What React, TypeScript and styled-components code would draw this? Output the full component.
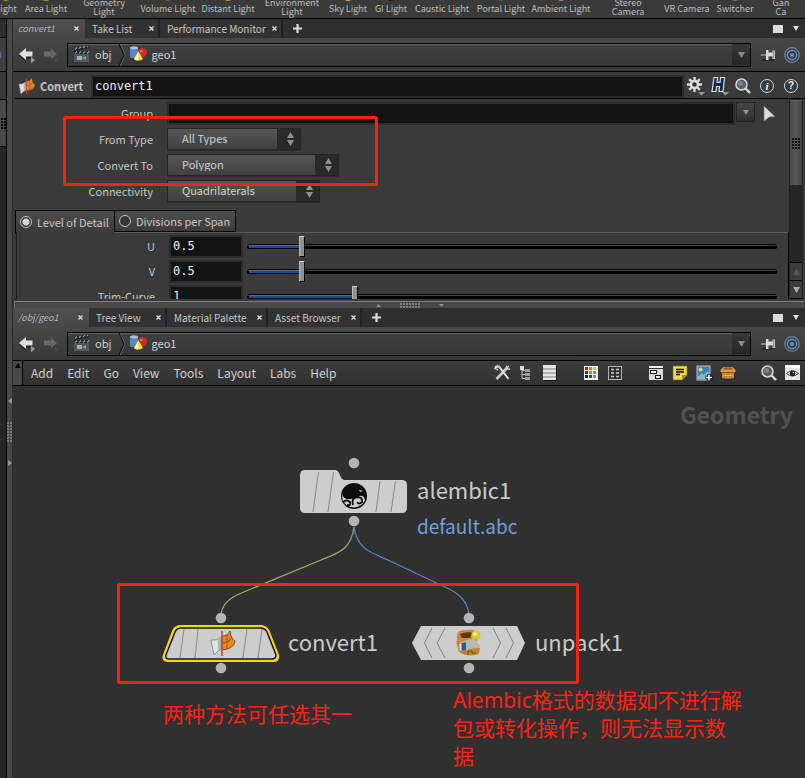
import React, { useState } from 'react';
import styled, { createGlobalStyle, css } from 'styled-components';

const ui = `'Noto Sans CJK SC', 'Noto Sans', sans-serif`;
const mono = `'DejaVu Sans Mono', 'Liberation Mono', monospace`;

const Global = createGlobalStyle`
  *, *::before, *::after { box-sizing: border-box; }
  html, body { margin: 0; background: #303030; }
  body { font-family: ${ui}; font-size: 11px; line-height: 14px; color: #c6c6c6; }
  button, input, select { font: inherit; color: inherit; margin: 0; border-radius: 0; }
  svg { display: block; flex: none; overflow: visible; }
`;

const Window = styled.div`
  position: relative;
  display: flex;
  flex-direction: column;
  min-height: 100vh;
  overflow: hidden;
  background: #3a3a3a;
`;

/* ---------- shelf ---------- */

const Shelf = styled.div`
  display: flex;
  align-items: flex-end;
  height: 19px;
  flex: none;
  overflow: hidden;
  padding-bottom: 2px;
  border-bottom: 1px solid #000;
  background: #3a3a3a;
`;

const ShelfTool = styled.button<{ $w: number; $single: boolean }>`
  display: flex;
  flex-direction: column;
  align-items: center;
  flex: none;
  width: ${p => p.$w}px;
  padding: 0 0 ${p => (p.$single ? 3 : 0)}px;
  border: 0;
  background: none;
  font-size: 9px;
  line-height: 9px;
  white-space: nowrap;
  color: #bdbdbd;
`;

const ShelfGlint = styled.i<{ $c: string }>`
  width: 8px;
  height: 4px;
  margin-bottom: 3px;
  border-radius: 0 0 4px 4px;
  background: ${p => p.$c};
`;

const shelfTools: [string[], number, string][] = [
  [['Light'], 12, '#a89420'],
  [['Area Light'], 68, '#b5a11c'],
  [['Geometry', 'Light'], 48, ''],
  [['Volume Light'], 80, '#8a5a2a'],
  [['Distant Light'], 40, '#b5a11c'],
  [['Environment', 'Light'], 88, ''],
  [['Sky Light'], 24, '#c9b36a'],
  [['GI Light'], 62, '#202020'],
  [['Caustic Light'], 40, '#3d4a78'],
  [['Portal Light'], 78, '#3f7a35'],
  [['Ambient Light'], 42, '#8c8c8c'],
  [['Stereo', 'Camera'], 92, ''],
  [['VR Camera'], 26, '#484848'],
  [['Switcher'], 70, '#777777'],
  [['Gan', 'Ca'], 22, ''],
];

/* ---------- frame ---------- */

const Workspace = styled.div`
  display: flex;
  flex: 1;
`;

const Neighbour = styled.div`
  display: flex;
  flex-direction: column;
  flex: none;
  width: 7px;
  overflow: hidden;
  border-right: 1px solid #000;
  background: #262626;
`;

const NeighbourBar = styled.div<{ $h: number; $bg: string }>`
  height: ${p => p.$h}px;
  flex: none;
  display: flex;
  align-items: center;
  justify-content: flex-end;
  border-bottom: 1px solid #000;
  background: ${p => p.$bg};
`;

const NeighbourTarget = styled.div`
  margin-right: 5px;
`;

const VSplitter = styled.div`
  display: flex;
  flex-direction: column;
  align-items: center;
  flex: none;
  width: 5px;
  padding-top: 379px;
  gap: 18px;
  background: #484848;
`;

const Main = styled.main`
  display: flex;
  flex-direction: column;
  flex: 1;
  min-width: 0;
  border-left: 1px solid #2b2b2b;
`;

const HSplitter = styled.div`
  display: flex;
  align-items: center;
  justify-content: center;
  gap: 19px;
  height: 7px;
  flex: none;
  margin: 0 1px;
  border-top: 1px solid #808080;
  border-left: 1px solid #707070;
  background: #484848;
`;

/* ---------- pane tabs ---------- */

const TabBar = styled.div`
  display: flex;
  align-items: stretch;
  height: 19px;
  flex: none;
  background: #2e2e2e;
`;

const Tab = styled.div<{ $w: number; $active?: boolean }>`
  display: flex;
  align-items: center;
  justify-content: space-between;
  flex: none;
  width: ${p => p.$w}px;
  padding: 0 4px 0 7px;
  border-right: 2px solid #222;
  background: #323232;
  font-size: 10px;
  ${p => p.$active && css`
    padding-left: 5px;
    padding-right: 6px;
    border-right: 0;
    background: linear-gradient(#505050, #464646);
    font-size: 9px;
    font-style: italic;
    color: #b4b4b4;
  `}
`;

const TabName = styled.button`
  padding: 0;
  border: 0;
  background: none;
  white-space: nowrap;
`;

const IconButton = styled.button`
  display: flex;
  align-items: center;
  justify-content: center;
  flex: none;
  padding: 0;
  border: 0;
  background: none;
`;

const AddTab = styled(IconButton)`
  width: 28px;
`;

const TabTools = styled.div`
  display: flex;
  align-items: center;
  gap: 10px;
  margin-left: auto;
  padding-right: 6px;
`;

/* ---------- path bar ---------- */

const PathBar = styled.div`
  display: flex;
  align-items: center;
  height: 34px;
  flex: none;
  padding: 0 5px 0 6px;
  border-bottom: 1px solid #000;
  background: linear-gradient(#484848, #383838);
`;

const HistoryButtons = styled.div`
  display: flex;
  gap: 8px;
  width: 48px;
  flex: none;
`;

const PathField = styled.div`
  display: flex;
  align-items: center;
  flex: 1;
  height: 24px;
  padding-left: 5px;
  border: 1px solid #000;
  box-shadow: inset 0 1px #666;
  background: linear-gradient(#404040, #373737);
`;

const Crumb = styled.button`
  display: flex;
  align-items: center;
  gap: 5px;
  padding: 0 0 2px;
  border: 0;
  background: none;
  color: #d2d2d2;
`;

const PathDrop = styled(IconButton)`
  width: 18px;
  height: 21px;
  margin-left: auto;
  background: linear-gradient(#383838, #262626);
`;

const PathTools = styled.div`
  display: flex;
  align-items: center;
  gap: 7px;
  margin-left: 10px;
`;

/* ---------- parameter pane ---------- */

const NodeHeader = styled.div`
  display: flex;
  align-items: center;
  height: 27px;
  flex: none;
  margin-left: 2px;
  padding: 2px 7px 0 4px;
  border-bottom: 1px solid #000;
`;

const NodeType = styled.label`
  width: 51px;
  margin-left: 5px;
  font-size: 11px;
  font-weight: 700;
`;

const DarkInput = styled.input`
  min-width: 0;
  height: 23px;
  padding: 0 2px;
  border: 2px solid #2b2b2b;
  outline: 0;
  background: #131313;
  font-family: ${mono};
  font-size: 12px;
  color: #f0f0f0;
`;

const NameInput = styled(DarkInput)`
  flex: 1;
`;

const HeaderTools = styled.div`
  display: flex;
  align-items: center;
  gap: 6px;
  margin-left: 3px;
`;

const ParamPane = styled.div`
  display: flex;
  height: 200px;
  flex: none;
  overflow: hidden;
  padding-right: 2px;
`;

const ParamBody = styled.div`
  display: flex;
  flex-direction: column;
  flex: 1;
  min-width: 0;
  padding-top: 3px;
`;

const ParamList = styled.div`
  display: flex;
  flex-direction: column;
  gap: 4px;
`;

const ParamRow = styled.div`
  display: flex;
  align-items: center;
  height: 22px;
`;

const ParamLabel = styled.label<{ $w: number; $gap: number }>`
  flex: none;
  width: ${p => p.$w}px;
  margin-right: ${p => p.$gap}px;
  text-align: right;
  white-space: nowrap;
`;

const GroupInput = styled(DarkInput)`
  flex: 1;
`;

const SmallDrop = styled(IconButton)`
  width: 19px;
  height: 20px;
  margin: 0 9px 2px 1px;
  border: 1px solid #242424;
  background: linear-gradient(#444, #303030);
`;

const PickButton = styled(IconButton)`
  margin-right: 13px;
`;

const SelectShell = styled.div<{ $w: number }>`
  position: relative;
  width: ${p => p.$w}px;
  height: 22px;
`;

const Select = styled.select`
  appearance: none;
  width: 100%;
  height: 22px;
  padding: 0 24px 2px 14px;
  border: 1px solid #252525;
  outline: 0;
  background: linear-gradient(90deg, transparent calc(100% - 23px), #2a2a2a calc(100% - 23px)), linear-gradient(#555, #404040);
  box-shadow: 0 1px #2c2c2c;
  color: #d0d0d0;
`;

const Stepper = styled.span`
  position: absolute;
  top: 4px;
  right: 7px;
  pointer-events: none;
`;

const FolderTabs = styled.div`
  display: flex;
  height: 24px;
  flex: none;
  margin: 8px 0 0 2px;
`;

const FolderTab = styled.label<{ $w: number; $active: boolean }>`
  display: flex;
  align-items: center;
  gap: 5px;
  width: ${p => p.$w}px;
  height: ${p => (p.$active ? 24 : 22)}px;
  padding-left: 4px;
  border: 1px solid #000;
  white-space: nowrap;
  ${p => p.$active
    ? css`border-width: 1px 0 0 1px; background: linear-gradient(#4c4c4c, #3a3a3a); padding-bottom: 2px;`
    : css`background: linear-gradient(#4c4c4c, #3c3c3c);`}
`;

const Radio = styled.input`
  appearance: none;
  width: 12px;
  height: 12px;
  border: 1px solid #c4c4c4;
  border-radius: 50%;
  background: #363636;
  &:checked { background: radial-gradient(#d4d4d4 0 3px, #363636 4px); }
`;

const FolderBody = styled.div`
  display: flex;
  flex-direction: column;
  gap: 3px;
  flex: 1;
  min-height: 0;
  overflow: hidden;
  margin: -2px 0 0 3px;
  padding-top: 3px;
  border-left: 1px solid #222;
  border-right: 1px solid #000;
  background: linear-gradient(#5a5a5a, #5a5a5a) 98px 0 / 100% 1px no-repeat;
`;

const ValueInput = styled(DarkInput)`
  width: 74px;
  margin-right: 4px;
`;

const SliderRow = styled(ParamRow)`
  flex: none;
  padding-right: 11px;
`;

const Slider = styled.input`
  appearance: none;
  flex: 1;
  min-width: 0;
  height: 22px;
  background: none;
  --track: linear-gradient(#000 0 1px, #444 1px 2px, #000 2px);
  &::-webkit-slider-runnable-track {
    height: 5px;
    border-radius: 2px;
    background:
      linear-gradient(#000 0 1px, #6a6a6a 1px 2px, #0a4fa3 2px 4px, #000 4px) 2px 0 / var(--fill) 5px no-repeat,
      var(--track);
  }
  &::-webkit-slider-thumb {
    appearance: none;
    width: 6px;
    height: 21px;
    margin-top: -8px;
    border: 1px solid #000;
    border-top-color: #ccc;
    border-left-color: #bbb;
    background: #929292;
  }
`;

const ScrollTrack = styled.div`
  display: flex;
  flex-direction: column;
  flex: none;
  width: 14px;
  border: 1px solid #222;
  border-width: 0 1px;
  background: #252525;
`;

const ScrollThumb = styled.div`
  display: flex;
  align-items: center;
  justify-content: center;
  height: 85px;
  margin-top: 1px;
  border-top: 1px solid #666;
  background: linear-gradient(90deg, #484848, #585858, #424242);
`;

const ScrollStep = styled(IconButton)`
  height: 18px;
  border-top: 1px solid #000;
  background: #3c3c3c;
`;

const ScrollSteps = styled.div`
  display: flex;
  flex-direction: column;
  margin-top: auto;
  border-bottom: 1px solid #000;
`;

const PaneFoot = styled.div`
  height: 2px;
  flex: none;
`;

/* ---------- network pane ---------- */

const MenuBar = styled.div`
  display: flex;
  align-items: center;
  height: 25px;
  flex: none;
  border-bottom: 1px solid #000;
  background: linear-gradient(#3c3c3c, #303030);
`;

const CollapseStrip = styled(IconButton)`
  align-self: stretch;
  align-items: flex-start;
  width: 10px;
  padding-top: 2px;
  border: solid #000;
  border-width: 0 1px 0 0;
  background: #484848;
`;

const Menu = styled.nav`
  display: flex;
  gap: 14px;
  margin-left: 8px;
`;

const MenuItem = styled.button`
  padding: 0;
  border: 0;
  background: none;
  font-size: 12px;
  color: #cfcfcf;
`;

const IconGroups = styled.div`
  display: flex;
  gap: 25px;
  margin-left: auto;
  padding-right: 4px;
`;

const IconGroup = styled.div`
  display: flex;
  gap: 8px;
`;

const Canvas = styled.section`
  position: relative;
  flex: 1;
  min-height: 392px;
  overflow: hidden;
  background: #303030;
`;

const ContextName = styled.div`
  padding: 12px 12px 0 0;
  text-align: right;
  font-size: 23px;
  line-height: 32px;
  font-weight: 700;
  color: #505050;
`;

const Wires = styled.svg`
  position: absolute;
  left: 0;
  top: 0;
`;

const NodeBox = styled.div<{ $x: number; $y: number }>`
  position: absolute;
  left: ${p => p.$x}px;
  top: ${p => p.$y}px;
  display: flex;
  align-items: center;
  gap: 10px;
`;

const NodeText = styled.div`
  font-size: 22px;
  line-height: 36px;
  white-space: nowrap;
  color: #cbcbcb;
`;

const FileText = styled.div`
  position: absolute;
  left: 404px;
  top: 122px;
  font-size: 19px;
  line-height: 36px;
  color: #6f9fdc;
`;

/* ---------- annotations ---------- */

const Frame = styled.div<{ $x: number; $y: number; $w: number; $h: number }>`
  position: absolute;
  left: ${p => p.$x}px;
  top: ${p => p.$y}px;
  width: ${p => p.$w}px;
  height: ${p => p.$h}px;
  border: 3px solid #fb2214;
  border-radius: 3px;
  pointer-events: none;
`;

const Note = styled.p<{ $x: number; $y: number }>`
  position: absolute;
  left: ${p => p.$x}px;
  top: ${p => p.$y}px;
  margin: 0;
  font-family: 'Noto Sans', 'Noto Sans CJK SC', sans-serif;
  font-size: 21px;
  line-height: 28px;
  white-space: nowrap;
  color: #fb2214;
`;

/* ---------- icons ---------- */

const Tri = ({ w = 7, h = 6, up = false, c = '#8f8f8f' }) => (
  <svg width={w} height={h} viewBox="0 0 10 10" preserveAspectRatio="none">
    <path d={up ? 'M0 10L5 0L10 10Z' : 'M0 0H10L5 10Z'} fill={c} />
  </svg>
);

const SideTri = ({ left = false }) => (
  <svg width="4" height="6" viewBox="0 0 4 6"><path d={left ? 'M4 0V6L0 3Z' : 'M0 0V6L4 3Z'} fill="#999" /></svg>
);

const Dots = ({ cols, rows, c, p = 3 }: { cols: number; rows: number; c: string; p?: number }) => (
  <svg width={cols * p - 1} height={rows * p - 1}>
    {Array.from({ length: cols * rows }, (_, i) => (
      <rect key={i} x={(i % cols) * p} y={Math.floor(i / cols) * p} width={p - 1} height={p - 1} fill={c} />
    ))}
  </svg>
);

const CloseX = () => (
  <svg width="5" height="5" viewBox="0 0 5 5"><path d="M.5 .5L4.5 4.5M4.5 .5L.5 4.5" stroke="#d8d8d8" strokeWidth="1.4" /></svg>
);

const Plus = () => (
  <svg width="9" height="9" viewBox="0 0 9 9"><path d="M4.5 0V9M0 4.5H9" stroke="#dcdcdc" strokeWidth="2.2" /></svg>
);

const BackArrow = () => (
  <svg width="16" height="16" viewBox="0 0 16 16">
    <path d="M0 8.500L7 2.500V6H13.500V11.500H7V15Z" fill="#202020" />
    <path d="M0 7L7 1V4.500H13.500V9.500H7V13Z" fill="#dededb" />
    <path d="M12 9.500L16 13L12 16.500Z" fill="#9a9a9a" />
  </svg>
);

const ForwardArrow = () => (
  <svg width="16" height="16" viewBox="0 0 16 16">
    <path d="M14 7L8 1.500V4.500H1V9.500H8V12.500Z" fill="#666" />
    <path d="M12 11L15 13.500L12 16Z" fill="#4a4a4a" />
  </svg>
);

const Clapper = () => (
  <svg width="17" height="17" viewBox="0 0 17 17">
    <path d="M1 3L15 0L16 3L2 6Z" fill="#1f2324" />
    <path d="M2 4.500L4 2.500M6 3.700L8 1.700M10 3L12 1M14 2.200L15 1" stroke="#999" strokeWidth="1.300" />
    <rect x="1" y="6" width="15" height="11" fill="#4f595d" />
    <path d="M1 7.500H16" stroke="#202527" strokeWidth="3" />
    <path d="M2 8.500L4 6.500M6 8.500L8 6.500M10 8.500L12 6.500M14 8.500L16 6.500" stroke="#999" strokeWidth="1.300" />
    <rect x="4" y="11" width="5" height="4" fill="#a7acad" /><path d="M9 13L13 11V15Z" fill="#8f9799" />
  </svg>
);

const Chevron = () => (
  <svg width="6" height="22" viewBox="0 0 6 22">
    <path d="M1 0L6 11L1 22" fill="none" stroke="#777" /><path d="M0 0L5 11L0 22" fill="none" stroke="#151515" strokeWidth="1.300" />
  </svg>
);

const GeoIcon = () => (
  <svg width="17" height="15" viewBox="0 0 17 15">
    <rect x="0" y="1" width="8" height="11" rx="1.500" fill="#5b86bd" /><ellipse cx="4" cy="1.800" rx="4" ry="1.600" fill="#a4c2e5" />
    <circle cx="12.500" cy="6.500" r="4.500" fill="#cc2b20" /><circle cx="11.300" cy="5" r="1.300" fill="#ed7a6d" />
    <path d="M8.500 5.500L13 13Q8.500 16 4 13Z" fill="#f1df43" /><path d="M8.500 5.500L8 14.500Q5.500 14.500 4 13Z" fill="#fff39a" />
  </svg>
);

const Pin = () => (
  <svg width="16" height="14" viewBox="0 0 16 14">
    <path d="M1 12H13" stroke="#2a2a2a" strokeWidth="2" />
    <path d="M0 7H6" stroke="#aaa" strokeWidth="1.300" />
    <path d="M5 2H7.500V4.500H11.500V2.500H14V11H11.500V9H7.500V12H5Z" fill="#dadada" />
    <path d="M7.500 8.500H11.500M12.700 3V10.500" stroke="#777" />
  </svg>
);

const Target = ({ s = 16 }) => (
  <svg width={s} height={s} viewBox="0 0 16 16" fill="none" stroke="#6183b4">
    <circle cx="8" cy="8" r="7.300" strokeWidth="1.200" /><circle cx="8" cy="8" r="4.600" stroke="#7390b8" strokeWidth="1.200" />
    <circle cx="8" cy="8" r="2" fill="#5da1e8" stroke="#36639b" />
  </svg>
);

const ConvertIcon = ({ s = 16 }) => (
  <svg width={s} height={s} viewBox="0 0 24 24">
    <path d="M0 9Q5 10 11 6V18Q7 19 3 24Z" fill="#dfe4df" stroke="#8d9a93" />
    <path d="M7 8L11 6V18L7 19.500Z" fill="#a9b8b0" />
    <path d="M11 5Q17 5 19 0Q20 8 24 10Q23 18 11 19Z" fill="#e6862a" stroke="#8d4e16" />
    <path d="M11 12Q18 12 21 6M16 4V18" fill="none" stroke="#9c5518" />
    <path d="M11 0V25" stroke="#c8403a" strokeWidth="1.500" />
  </svg>
);

const Gear = () => (
  <svg width="18" height="18" viewBox="0 0 18 18">
    <g stroke="#dcdcdc" strokeWidth="2.400">
      <path d="M7.500 0V4M7.500 11V15M0 7.500H4M11 7.500H15M2.200 2.200L5 5M10 10L12.800 12.800M12.800 2.200L10 5M5 10L2.200 12.800" />
      <circle cx="7.500" cy="7.500" r="3.500" fill="#333" />
    </g>
    <path d="M11 15H18L14.500 18.500Z" fill="#999" />
  </svg>
);

const HIcon = () => (
  <svg width="18" height="18" viewBox="0 0 18 18">
    <path d="M3 .5H6.500L6 5.500H9L9.500 .5H13.500L12 14.500H8L8.500 9.500H5.500L5 14.500H1Z" fill="#10294b" stroke="#dcdfe4" strokeWidth="1.200" />
    <path d="M11 15H18L14.500 18.500Z" fill="#999" />
  </svg>
);

const Lens = () => (
  <svg width="16" height="16" viewBox="0 0 16 16">
    <path d="M10 10L15 15" stroke="#dcdcdc" strokeWidth="2.400" />
    <circle cx="6.500" cy="6.500" r="5.500" fill="#566167" stroke="#d8d8d8" strokeWidth="1.500" />
    <circle cx="5.500" cy="5.500" r="2.500" fill="#77858c" />
  </svg>
);

const Badge = styled.span<{ $i?: boolean }>`
  display: flex;
  align-items: center;
  justify-content: center;
  width: 14px;
  height: 14px;
  border: 1px solid #d6d6d6;
  border-radius: 50%;
  background: #343b3f;
  font: ${p => (p.$i ? "italic 700 11px/12px 'Liberation Serif', serif" : "700 10px/12px 'Liberation Sans', sans-serif")};
  color: #f0f0f0;
`;

const BadgeTools = styled.div`
  display: flex;
  gap: 10px;
  margin-left: 3px;
`;

const Cursor = () => (
  <svg width="12" height="15" viewBox="0 0 12 15"><path d="M0 0L11 10.500L5.500 11L0 15Z" fill="#dcdcd8" stroke="#777" strokeWidth=".6" /></svg>
);

const UpDown = () => (
  <svg width="7" height="14" viewBox="0 0 7 14"><path d="M0 6L3.500 0L7 6ZM0 8H7L3.500 14Z" fill="#8f8f8f" /></svg>
);

const ToolsIcon = () => (
  <svg width="16" height="16" viewBox="0 0 16 16" fill="none">
    <path d="M2.500 14L13 3" stroke="#cfcfcf" strokeWidth="2.600" /><path d="M12 4L15 1M12.500 .5V4H16" stroke="#cfcfcf" strokeWidth="1.300" />
    <path d="M1 2L5 1.500L14.500 14" stroke="#e6e6e6" strokeWidth="2" /><path d="M0 3L4 5M3 0L6 3" stroke="#bdbdbd" strokeWidth="1.500" />
  </svg>
);

const TreeIcon = () => (
  <svg width="16" height="16" viewBox="0 0 16 16">
    <path d="M4 3V13.500H8M4 5.500H8M4 9.500H8" fill="none" stroke="#c4c4c4" />
    <rect x="2" y="1" width="4" height="4" fill="#ddd" /><path d="M7 4H12V7H7ZM7 8H12V11H7ZM7 12H12V15H7Z" fill="#9d9d9d" />
  </svg>
);

const ListIcon = () => (
  <svg width="16" height="16" viewBox="0 0 16 16">
    <rect x="2" y="1" width="13" height="15" fill="#151515" /><rect x="1" y="0" width="13" height="15" fill="#e4e4e2" />
    <path d="M1 4H14M1 8H14M1 12H14" stroke="#b0b0ae" strokeWidth="2" />
  </svg>
);

const PaletteIcon = () => (
  <svg width="16" height="16" viewBox="0 0 16 16">
    <rect x="1" y="1" width="14" height="14" fill="#f2f2f2" />
    {['#c81414', '#e8780c', '#e0c40a', '#243a60', '#6cb820', '#5a96d0', '#151515', '#444', '#8a8a8a'].map((c, i) => (
      <rect key={c} x={2 + (i % 3) * 4} y={2 + Math.floor(i / 3) * 4} width="3" height="3" fill={c} />
    ))}
  </svg>
);

const GridIcon = () => (
  <svg width="16" height="16" viewBox="0 0 16 16">
    <rect x="1.500" y="1.500" width="13" height="13" fill="#2f2f2f" stroke="#b6b6b6" />
    <path d="M4 4.500H7M9 4.500H12M4 8H7M9 8H12M4 11.500H7M9 11.500H12" stroke="#cfcfcf" strokeWidth="1.600" />
  </svg>
);

const NetBoxIcon = () => (
  <svg width="16" height="16" viewBox="0 0 16 16">
    <rect x="1" y="1" width="14" height="14" fill="#d9d9d7" /><path d="M1 2H15" stroke="#f8f8f8" strokeWidth="2" />
    <path d="M1 3.500H15" stroke="#333" />
    <rect x="2.500" y="5.500" width="6" height="3" fill="#fff" stroke="#111" /><rect x="7.500" y="10.500" width="5" height="3" fill="#fff" stroke="#111" />
  </svg>
);

const StickyIcon = () => (
  <svg width="16" height="16" viewBox="0 0 16 16">
    <path d="M1 1H15V10L10 15H1Z" fill="#ead94a" stroke="#7c6e12" strokeWidth=".6" /><path d="M15 10L10 15V10Z" fill="#a89520" />
    <path d="M4 4.500H12M4 7H12M4 9.500H8" stroke="#141100" strokeWidth="1.300" />
  </svg>
);

const ImageIcon = () => (
  <svg width="16" height="16" viewBox="0 0 16 16">
    <rect x="1" y="1" width="13" height="14" fill="#3a7fc6" stroke="#c0c0c0" />
    <circle cx="4.500" cy="4.500" r="2" fill="#ecd54a" /><path d="M1.500 14V12L6 8L8 10L11 6L13.500 9V14Z" fill="#7dc0ba" />
    <path d="M13 9V16M9.500 12.500H16.500" stroke="#111" strokeWidth="3.400" /><path d="M13 9.500V15.500M10 12.500H16" stroke="#fff" strokeWidth="1.500" />
  </svg>
);

const CrateIcon = () => (
  <svg width="16" height="16" viewBox="0 0 16 16">
    <path d="M2 6H14V13Q8 14.500 2 13Z" fill="#c98635" />
    <path d="M3.500 2H12.500L15.500 5V7H.5V5Z" fill="#dc9b4b" />
    <path d="M4.500 2.500H11.500L13 4.500H3Z" fill="#94581b" />
    <path d="M1 7.500H15" stroke="#8c5216" /><path d="M3 10.500H13" stroke="#e5ad61" />
  </svg>
);

const EyeIcon = () => (
  <svg width="16" height="16" viewBox="0 0 16 16">
    <rect x="0" y="0" width="15" height="15" fill="#e5e5e3" /><path d="M0 1.500H15" stroke="#fff" strokeWidth="3" />
    <path d="M1.500 8.500Q7.500 3 13.500 8.500Q7.500 13.500 1.500 8.500Z" fill="#fff" stroke="#333" />
    <circle cx="7.500" cy="8.300" r="2.800" fill="#222" /><circle cx="8.300" cy="7.500" r=".8" fill="#ccc" />
  </svg>
);

/* ---------- composed parts ---------- */

const PaneTabs = ({ tabs }: { tabs: [string, number][] }) => (
  <TabBar>
    {tabs.map(([name, w], i) => (
      <Tab key={name} $w={w} $active={i === 0}>
        <TabName>{name}</TabName>
        <IconButton aria-label={`Close ${name}`}><CloseX /></IconButton>
      </Tab>
    ))}
    <AddTab aria-label="New tab"><Plus /></AddTab>
    <TabTools>
      <IconButton aria-label="Maximize pane"><svg width="10" height="8"><rect width="10" height="8" fill="#dcdcda" /></svg></IconButton>
      <IconButton aria-label="Pane menu"><Tri w={6} h={5} c="#e0e0e0" /></IconButton>
    </TabTools>
  </TabBar>
);

const ChevronGap = styled.span`
  flex: none;
  margin: 0 5px 0 7px;
`;

const Path = () => (
  <PathBar>
    <HistoryButtons>
      <IconButton aria-label="Back"><BackArrow /></IconButton>
      <IconButton aria-label="Forward"><ForwardArrow /></IconButton>
    </HistoryButtons>
    <PathField>
      <Crumb><Clapper />obj</Crumb>
      <ChevronGap><Chevron /></ChevronGap>
      <Crumb><GeoIcon />geo1</Crumb>
      <PathDrop aria-label="Path history"><Tri w={7} h={6} c="#8a8a8a" /></PathDrop>
    </PathField>
    <PathTools>
      <IconButton aria-label="Pin"><Pin /></IconButton>
      <IconButton aria-label="Follow selection"><Target /></IconButton>
    </PathTools>
  </PathBar>
);

const Choice = ({ id, label, w, options }: { id: string; label: string; w: number; options: string[] }) => (
  <ParamRow>
    <ParamLabel htmlFor={id} $w={140} $gap={14}>{label}</ParamLabel>
    <SelectShell $w={w}>
      <Select id={id}>{options.map(o => <option key={o}>{o}</option>)}</Select>
      <Stepper><UpDown /></Stepper>
    </SelectShell>
  </ParamRow>
);

const SliderParam = ({ id, label, initial }: { id: string; label: string; initial: number }) => {
  const [v, setV] = useState(initial);
  return (
    <SliderRow>
      <ParamLabel htmlFor={id} $w={138} $gap={14}>{label}</ParamLabel>
      <ValueInput id={id} value={v} onChange={e => setV(Number(e.target.value) || 0)} />
      <Slider
        type="range" min={0} max={5} step={0.1} value={v} aria-label={`${label} slider`}
        onChange={e => setV(Number(e.target.value))}
        style={{ '--fill': `${v * 20}%` } as React.CSSProperties}
      />
    </SliderRow>
  );
};

const Port = ({ x, y }: { x: number; y: number }) => <circle cx={x} cy={y} r="5.300" fill="#b4b4b4" />;

const AlembicNode = () => (
  <svg width="107" height="66" viewBox="0 0 107 66">
    <Port x={54} y={7} />
    <path d="M5 14H35Q38 14 39.500 18Q41 23 44 24H102Q107 24 107 29V52Q107 57 102 57H5Q0 57 0 52V19Q0 14 5 14Z" fill="#cdcdcd" />
    <path d="M18.500 16L13 56M33.500 16L28 56M80 25L76 56M95.500 25L91 56" stroke="#8b8b8b" />
    <circle cx="54" cy="40" r="13" fill="#0c0c0c" />
    <path d="M42 37Q43 44 50 43Q56 43 59 40Q64 39 65 44Q62 51 54 51.500Q46 51 42.500 44Z" fill="#d0d0d0" />
    <g fill="none" stroke="#0c0c0c" strokeWidth="1.800">
      <path d="M53 49Q51 42 57 41Q63 41 62 46Q59 49 57 46" /><path d="M43 46Q47 43 50 46Q51 50 47 49" />
    </g>
    <path d="M59 34L63.500 35L60 35.800Z" fill="#ddd" />
    <Port x={54} y={65} />
  </svg>
);

const ConvertNode = () => (
  <svg width="115" height="60" viewBox="0 0 115 60">
    <Port x={58} y={7} />
    <path d="M18 15H97Q103 15 105.500 20L115 44Q116 50 110 50H5Q-1 50 1 44L10 20Q12 15 18 15Z" fill="#cdcdcd" stroke="#ffd500" strokeWidth="2" />
    <path d="M18 17H97Q102 17 104 21L113 44Q113 48 109 48H6Q2 48 3 44L12 21Q14 17 18 17Z" fill="#cdcdcd" stroke="#171717" strokeWidth="1.500" />
    <path d="M21 18L17 47M35 18L32 47M84 18L80 47M99 18L95 47" stroke="#8b8b8b" />
    <g transform="translate(48 20)"><ConvertIcon s={24} /></g>
    <Port x={58} y={57} />
  </svg>
);

const UnpackNode = () => (
  <svg width="113" height="60" viewBox="0 0 113 60">
    <Port x={57} y={7} />
    <path d="M9 15H105L113 32L105 49H9L0 32Z" fill="#cdcdcd" />
    <path d="M20 17L12.500 32L20 47M33 17L25 32L33 47M81 17L88.500 32L81 47M94 17L101.500 32L94 47" fill="none" stroke="#858585" />
    <path d="M45 23Q46 19 54 19Q64 18 66 22L65 30L45 31Z" fill="#c38b3a" /><path d="M48 23Q56 20 60 22L58 27H50Z" fill="#5c3712" />
    <path d="M44 30L47 41Q56 47 67 43L68 37L54 33Z" fill="#be8432" /><path d="M52 30L62 27L69 36L54 39Z" fill="#b8b9ab" />
    <path d="M47 33L54 31V39L49 40Z" fill="#2b5a9c" /><path d="M47 33L49.500 32V40H48Z" fill="#d8e2ec" />
    <circle cx="64" cy="24" r="4.500" fill="#dcc933" /><circle cx="63" cy="23" r="1.800" fill="#fff3a0" />
    <path d="M56 44V40H60V42H64" fill="none" stroke="#7a4a17" />
    <Port x={57} y={57} />
  </svg>
);

const menus = ['Add', 'Edit', 'Go', 'View', 'Tools', 'Layout', 'Labs', 'Help'];
const toolGroups: [string, React.ComponentType][][] = [
  [['Tools', ToolsIcon], ['Tree', TreeIcon], ['List', ListIcon]],
  [['Colors', PaletteIcon], ['Shapes', GridIcon]],
  [['Network box', NetBoxIcon], ['Sticky note', StickyIcon], ['Background image', ImageIcon], ['Gallery', CrateIcon]],
  [['Find', Lens], ['Display options', EyeIcon]],
];

export default function App() {
  const [folder, setFolder] = useState('Level of Detail');
  return (
    <Window>
      <Global />
      <Shelf>
        {shelfTools.map(([lines, w, glint]) => (
          <ShelfTool key={lines.join()} $w={w} $single={lines.length === 1}>
            {glint && <ShelfGlint $c={glint} />}
            {lines.map(l => <span key={l}>{l}</span>)}
          </ShelfTool>
        ))}
      </Shelf>
      <Workspace>
        <Neighbour>
          <NeighbourBar $h={19} $bg="#2e2e2e" />
          <NeighbourBar $h={34} $bg="#404040"><NeighbourTarget><Target /></NeighbourTarget></NeighbourBar>
          <NeighbourBar $h={28} $bg="#3a3a3a" />
          <NeighbourBar $h={47} $bg="#484848"><Dots cols={2} rows={4} c="#000" /></NeighbourBar>
        </Neighbour>
        <VSplitter><SideTri left /><Dots cols={2} rows={7} c="#7d7d7d" /><SideTri /></VSplitter>
        <Main>
          <PaneTabs tabs={[['convert1', 72], ['Take List', 75], ['Performance Monitor', 123]]} />
          <Path />
          <NodeHeader>
            <ConvertIcon />
            <NodeType htmlFor="node-name">Convert</NodeType>
            <NameInput id="node-name" defaultValue="convert1" />
            <HeaderTools>
              <IconButton aria-label="Settings"><Gear /></IconButton>
              <IconButton aria-label="Houdini menu"><HIcon /></IconButton>
              <IconButton aria-label="Search parameters"><Lens /></IconButton>
              <BadgeTools>
                <IconButton aria-label="Info"><Badge $i>i</Badge></IconButton>
                <IconButton aria-label="Help"><Badge>?</Badge></IconButton>
              </BadgeTools>
            </HeaderTools>
          </NodeHeader>
          <ParamPane>
            <ParamBody>
              <ParamList>
                <ParamRow>
                  <ParamLabel htmlFor="group" $w={140} $gap={14}>Group</ParamLabel>
                  <GroupInput id="group" />
                  <SmallDrop aria-label="Group list"><Tri w={6} h={5} /></SmallDrop>
                  <PickButton aria-label="Pick from viewport"><Cursor /></PickButton>
                </ParamRow>
                <Choice id="from" label="From Type" w={134} options={['All Types', 'Mesh', 'NURBS']} />
                <Choice id="to" label="Convert To" w={172} options={['Polygon', 'Mesh', 'NURBS Curve']} />
                <Choice id="conn" label="Connectivity" w={153} options={['Quadrilaterals', 'Triangles']} />
              </ParamList>
              <FolderTabs>
                {([['Level of Detail', 99], ['Divisions per Span', 122]] as [string, number][]).map(([name, w]) => (
                  <FolderTab key={name} $w={w} $active={folder === name}>
                    <Radio type="radio" name="folder" checked={folder === name} onChange={() => setFolder(name)} />
                    {name}
                  </FolderTab>
                ))}
              </FolderTabs>
              <FolderBody>
                <SliderParam id="u" label="U" initial={0.5} />
                <SliderParam id="v" label="V" initial={0.5} />
                <SliderParam id="trim" label="Trim-Curve" initial={1} />
              </FolderBody>
            </ParamBody>
            <ScrollTrack>
              <ScrollThumb><Dots cols={3} rows={4} c="#111" /></ScrollThumb>
              <ScrollSteps>
                <ScrollStep aria-label="Scroll up"><Tri up c="#555" /></ScrollStep>
                <ScrollStep aria-label="Scroll down"><Tri c="#aaa" /></ScrollStep>
              </ScrollSteps>
            </ScrollTrack>
          </ParamPane>
          <PaneFoot />
          <HSplitter><Tri w={5} h={3} up /><Dots cols={7} rows={2} c="#7d7d7d" /><Tri w={5} h={3} /></HSplitter>
          <PaneTabs tabs={[['/obj/geo1', 76], ['Tree View', 78], ['Material Palette', 101], ['Asset Browser', 94]]} />
          <Path />
          <MenuBar>
            <CollapseStrip aria-label="Collapse menu"><Tri w={6} h={5} up c="#000" /></CollapseStrip>
            <Menu>{menus.map(m => <MenuItem key={m}>{m}</MenuItem>)}</Menu>
            <IconGroups>
              {toolGroups.map((group, i) => (
                <IconGroup key={i}>
                  {group.map(([name, Icon]) => <IconButton key={name} aria-label={name}><Icon /></IconButton>)}
                </IconGroup>
              ))}
            </IconGroups>
          </MenuBar>
          <Canvas>
            <ContextName>Geometry</ContextName>
            <Wires width="560" height="240" fill="none" strokeWidth="1.200">
              <path d="M341 141C338 164 325 167 308 174L238 203C220 210 210 215 208 228" stroke="#98b070" />
              <path d="M341 141C344 164 360 167 375 174L432 201C448 208 454 216 456 228" stroke="#5886c4" />
            </Wires>
            <NodeBox $x={287} $y={70}><AlembicNode /><NodeText>alembic1</NodeText></NodeBox>
            <FileText>default.abc</FileText>
            <NodeBox $x={150} $y={225}><ConvertNode /><NodeText>convert1</NodeText></NodeBox>
            <NodeBox $x={399} $y={225}><UnpackNode /><NodeText>unpack1</NodeText></NodeBox>
          </Canvas>
        </Main>
      </Workspace>
      <Frame $x={63} $y={116} $w={315} $h={70} />
      <Frame $x={117} $y={583} $w={462} $h={101} />
      <Note $x={163} $y={700}>两种方法可任选其一</Note>
      <Note $x={453} $y={686}>Alembic格式的数据如不进行解<br />包或转化操作，则无法显示数<br />据</Note>
    </Window>
  );
}
